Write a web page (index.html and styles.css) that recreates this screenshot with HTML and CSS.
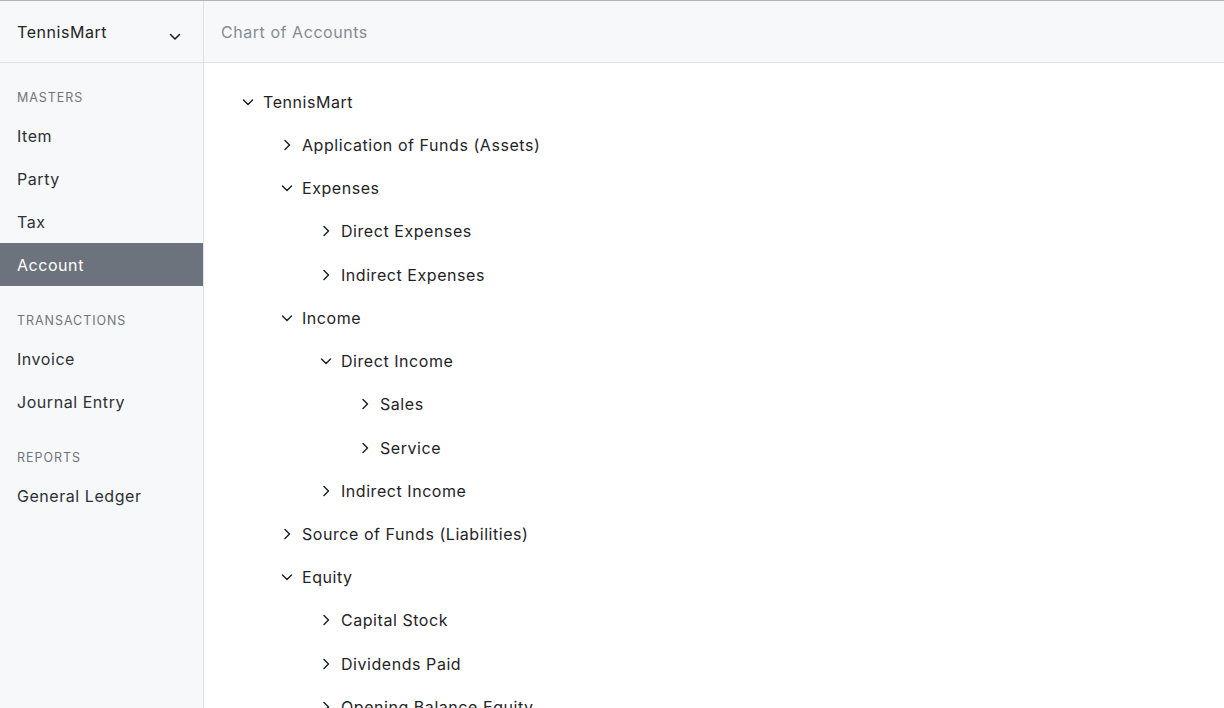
FILE: index.html
```html
<!DOCTYPE html>
<html>
<head>
<meta charset="utf-8">
<link rel="stylesheet" href="styles.css">
</head>
<body>
<div class="app">
  <aside class="sidebar">
    <div class="side-head">
      <span class="company">TennisMart</span>
      <svg class="head-chev" width="12" height="8" viewBox="0 0 12 8"><path d="M1.5 1.5 L6 6 L10.5 1.5" fill="none" stroke="#1f2328" stroke-width="1.6" stroke-linecap="round" stroke-linejoin="round"/></svg>
    </div>
    <nav class="nav">
      <div class="group">
        <div class="group-label">Masters</div>
        <div class="nav-item">Item</div>
        <div class="nav-item">Party</div>
        <div class="nav-item">Tax</div>
        <div class="nav-item active">Account</div>
      </div>
      <div class="group">
        <div class="group-label">Transactions</div>
        <div class="nav-item">Invoice</div>
        <div class="nav-item">Journal Entry</div>
      </div>
      <div class="group">
        <div class="group-label">Reports</div>
        <div class="nav-item">General Ledger</div>
      </div>
    </nav>
  </aside>
  <main class="main">
    <header class="page-head">Chart of Accounts</header>
    <div class="tree">
      <div class="row l0"><svg class="chev" viewBox="0 0 12 12"><path d="M1.5 4 L6 8.5 L10.5 4"/></svg><span>TennisMart</span></div>
      <div class="row l1"><svg class="chev" viewBox="0 0 12 12"><path d="M4 1.5 L8.5 6 L4 10.5"/></svg><span>Application of Funds (Assets)</span></div>
      <div class="row l1"><svg class="chev" viewBox="0 0 12 12"><path d="M1.5 4 L6 8.5 L10.5 4"/></svg><span>Expenses</span></div>
      <div class="row l2"><svg class="chev" viewBox="0 0 12 12"><path d="M4 1.5 L8.5 6 L4 10.5"/></svg><span>Direct Expenses</span></div>
      <div class="row l2"><svg class="chev" viewBox="0 0 12 12"><path d="M4 1.5 L8.5 6 L4 10.5"/></svg><span>Indirect Expenses</span></div>
      <div class="row l1"><svg class="chev" viewBox="0 0 12 12"><path d="M1.5 4 L6 8.5 L10.5 4"/></svg><span>Income</span></div>
      <div class="row l2"><svg class="chev" viewBox="0 0 12 12"><path d="M1.5 4 L6 8.5 L10.5 4"/></svg><span>Direct Income</span></div>
      <div class="row l3"><svg class="chev" viewBox="0 0 12 12"><path d="M4 1.5 L8.5 6 L4 10.5"/></svg><span>Sales</span></div>
      <div class="row l3"><svg class="chev" viewBox="0 0 12 12"><path d="M4 1.5 L8.5 6 L4 10.5"/></svg><span>Service</span></div>
      <div class="row l2"><svg class="chev" viewBox="0 0 12 12"><path d="M4 1.5 L8.5 6 L4 10.5"/></svg><span>Indirect Income</span></div>
      <div class="row l1"><svg class="chev" viewBox="0 0 12 12"><path d="M4 1.5 L8.5 6 L4 10.5"/></svg><span>Source of Funds (Liabilities)</span></div>
      <div class="row l1"><svg class="chev" viewBox="0 0 12 12"><path d="M1.5 4 L6 8.5 L10.5 4"/></svg><span>Equity</span></div>
      <div class="row l2"><svg class="chev" viewBox="0 0 12 12"><path d="M4 1.5 L8.5 6 L4 10.5"/></svg><span>Capital Stock</span></div>
      <div class="row l2"><svg class="chev" viewBox="0 0 12 12"><path d="M4 1.5 L8.5 6 L4 10.5"/></svg><span>Dividends Paid</span></div>
      <div class="row l2"><svg class="chev" viewBox="0 0 12 12"><path d="M4 1.5 L8.5 6 L4 10.5"/></svg><span>Opening Balance Equity</span></div>
    </div>
  </main>
</div>
</body>
</html>
```

FILE: styles.css
```css
* { box-sizing: border-box; }
html, body { margin: 0; padding: 0; height: 100%; overflow: hidden; }
body {
  font-family: Inter, "Noto Sans", sans-serif;
  color: #1f2328;
  background: #fff;
  border-top: 1px solid #b3b3b3;
  letter-spacing: 0.55px;
}
.app { display: flex; height: 707px; }
.sidebar {
  width: 204px;
  flex: none;
  background: #f7f8fa;
  border-right: 1px solid #dfe1e5;
}
.side-head {
  height: 62px;
  border-bottom: 1px solid #dfe1e5;
  display: flex;
  align-items: center;
  justify-content: space-between;
  padding: 0 22px 0 17px;
}
.company { font-size: 16px; color: #1f2328; }
.head-chev { margin-top: 10px; }
.group { padding-top: 26px; }
.group-label {
  font-size: 12.5px;
  line-height: 18px;
  text-transform: uppercase;
  color: #70757d;
  letter-spacing: 0.95px;
  padding-left: 17px;
  margin-bottom: 7px;
}
.nav-item {
  height: 43px;
  display: flex;
  align-items: center;
  padding-left: 17px;
  font-size: 16px;
  color: #2c3036;
}
.nav-item.active { background: #6c737d; color: #fff; }
.main { flex: 1; display: flex; flex-direction: column; min-width: 0; }
.page-head {
  height: 62px;
  flex: none;
  background: #f7f8fa;
  border-bottom: 1px solid #dfe1e5;
  display: flex;
  align-items: center;
  padding-left: 17px;
  font-size: 16px;
  color: #868b93;
}
.tree { padding-top: 17.2px; padding-left: 38px; }
.row {
  height: 43.23px;
  display: flex;
  align-items: center;
  font-size: 16px;
  color: #1f2328;
}
.row .chev {
  width: 12px;
  height: 12px;
  margin-right: 9px;
  fill: none;
  stroke: #1f2328;
  stroke-width: 1.5;
  stroke-linecap: round;
  stroke-linejoin: round;
}
.l1 { padding-left: 39px; }
.l2 { padding-left: 78px; }
.l3 { padding-left: 117px; }
```
